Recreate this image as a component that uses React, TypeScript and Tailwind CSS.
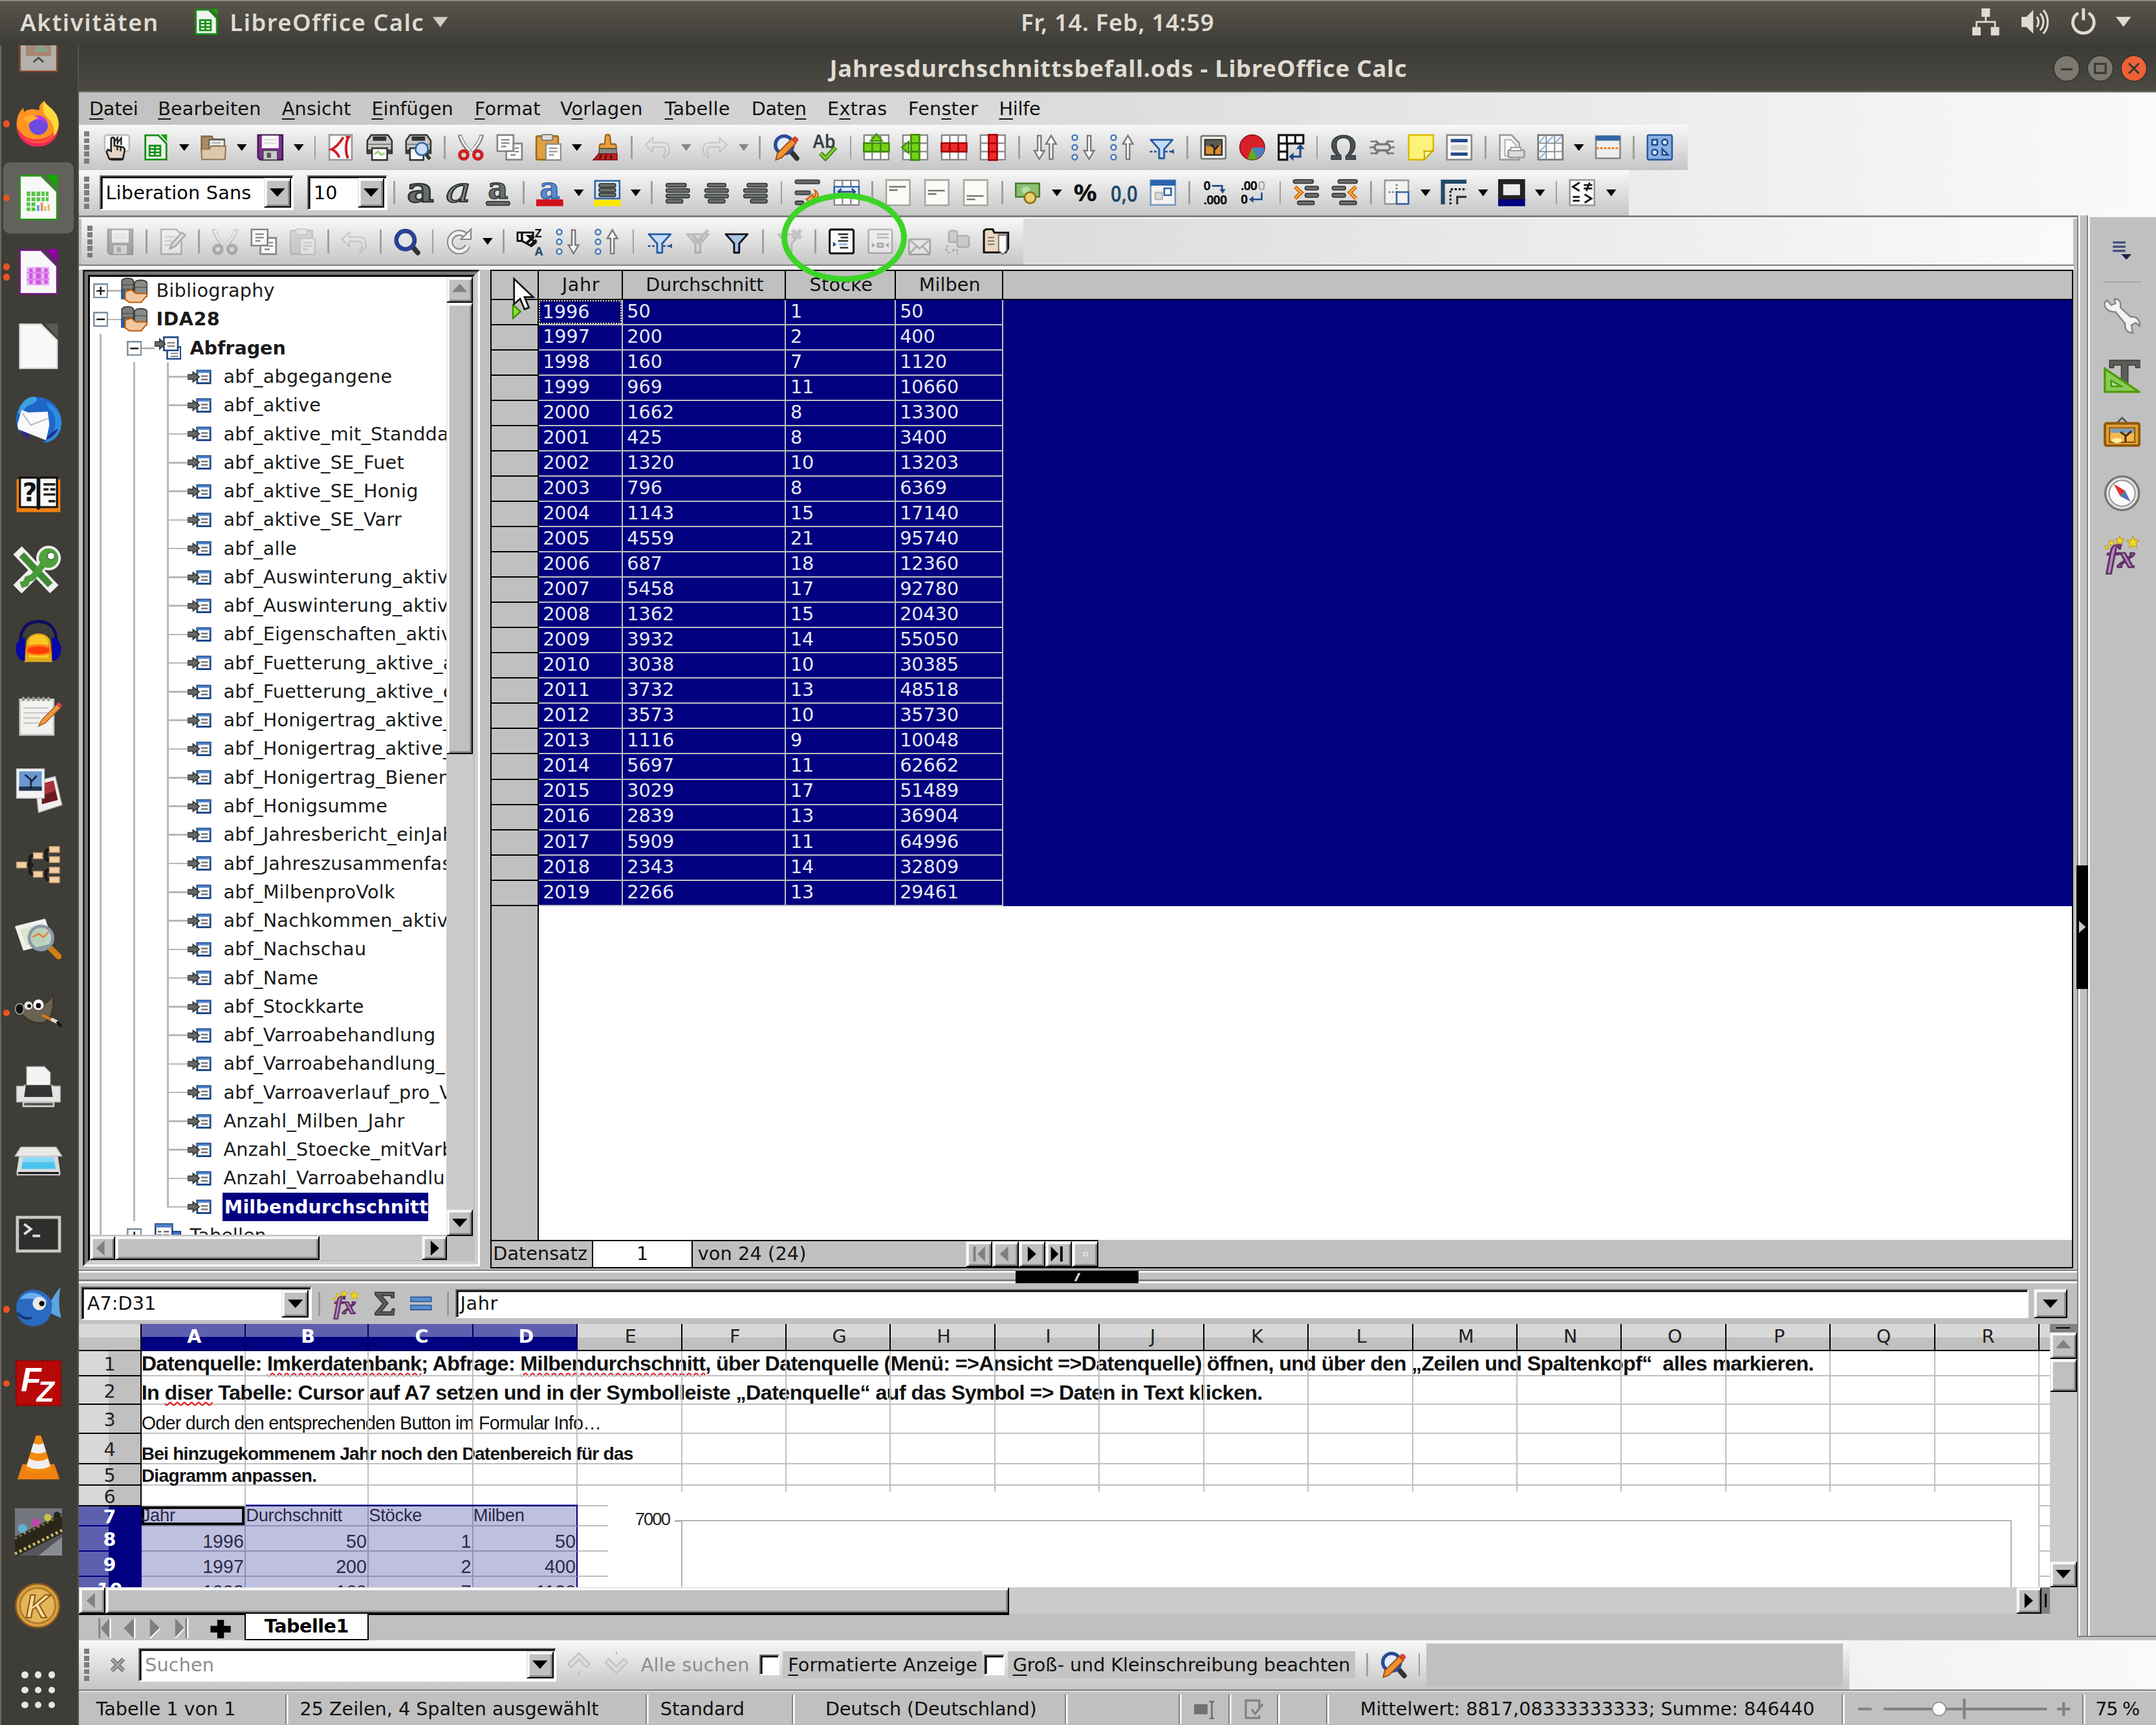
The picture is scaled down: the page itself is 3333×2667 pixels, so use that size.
import { useMemo, type ReactNode } from "react";
import clsx from "clsx";

const UI = '"DejaVu Sans"';
const SHELL = '"Noto Sans"';
const SHEET = '"Liberation Sans"';

const RECORDS = [
  [1996, 50, 1, 50],
  [1997, 200, 2, 400],
  [1998, 160, 7, 1120],
  [1999, 969, 11, 10660],
  [2000, 1662, 8, 13300],
  [2001, 425, 8, 3400],
  [2002, 1320, 10, 13203],
  [2003, 796, 8, 6369],
  [2004, 1143, 15, 17140],
  [2005, 4559, 21, 95740],
  [2006, 687, 18, 12360],
  [2007, 5458, 17, 92780],
  [2008, 1362, 15, 20430],
  [2009, 3932, 14, 55050],
  [2010, 3038, 10, 30385],
  [2011, 3732, 13, 48518],
  [2012, 3573, 10, 35730],
  [2013, 1116, 9, 10048],
  [2014, 5697, 11, 62662],
  [2015, 3029, 17, 51489],
  [2016, 2839, 13, 36904],
  [2017, 5909, 11, 64996],
  [2018, 2343, 14, 32809],
  [2019, 2266, 13, 29461],
];

const QUERIES = [
  "abf_abgegangene",
  "abf_aktive",
  "abf_aktive_mit_Standdaten",
  "abf_aktive_SE_Fuet",
  "abf_aktive_SE_Honig",
  "abf_aktive_SE_Varr",
  "abf_alle",
  "abf_Auswinterung_aktive",
  "abf_Auswinterung_aktive",
  "abf_Eigenschaften_aktive",
  "abf_Fuetterung_aktive_a",
  "abf_Fuetterung_aktive_e",
  "abf_Honigertrag_aktive_",
  "abf_Honigertrag_aktive_",
  "abf_Honigertrag_Bienen",
  "abf_Honigsumme",
  "abf_Jahresbericht_einJahr",
  "abf_Jahreszusammenfass",
  "abf_MilbenproVolk",
  "abf_Nachkommen_aktive",
  "abf_Nachschau",
  "abf_Name",
  "abf_Stockkarte",
  "abf_Varroabehandlung",
  "abf_Varroabehandlung_a",
  "abf_Varroaverlauf_pro_V",
  "Anzahl_Milben_Jahr",
  "Anzahl_Stoecke_mitVarb",
  "Anzahl_Varroabehandlun",
  "Milbendurchschnitt",
];

// "_" marks the mnemonic letter, second value is the width of the entry
const MENUS: [string, number, number][] = [
  ["_Datei", 29, 40.8],
  ["_Bearbeiten", 61.2, 73.6],
  ["_Ansicht", 41, 53.2],
  ["_Einfügen", 48.5, 61.2],
  ["_Format", 39.2, 50.8],
  ["V_orlagen", 49, 62],
  ["_Tabelle", 38.8, 51.6],
  ["Date_n", 32.5, 45],
  ["E_xtras", 35.5, 48],
  ["Fen_ster", 41.5, 54],
  ["_Hilfe", 24.5, 30],
];

let ctx: CanvasRenderingContext2D | null = null;
function textWidth(text: string, font: string) {
  if (!ctx) ctx = document.createElement("canvas").getContext("2d");
  if (!ctx) return 0;
  ctx.font = font;
  return ctx.measureText(text).width;
}

/** One line of text, tracked so that it fills `w` pixels. */
function Fit({ text, w, size = 11, family = UI, weight = 400, className, children }: {
  text: string; w: number; size?: number; family?: string; weight?: number; className?: string; children?: ReactNode;
}) {
  const spacing = useMemo(
    () => (w - textWidth(text, `${weight} ${size * 10}px ${family}`) / 10) / text.length,
    [text, w, size, family, weight]
  );
  return (
    <span
      className={clsx("whitespace-pre", className)}
      style={{ letterSpacing: `${spacing}px`, fontSize: size, fontFamily: `${family}, sans-serif`, fontWeight: weight }}
    >
      {children ?? text}
    </span>
  );
}

function Mnemonic({ label, w }: { label: string; w: number }) {
  const i = label.indexOf("_");
  return (
    <Fit text={label.replace("_", "")} w={w}>
      {label.slice(0, i)}
      <span className="underline underline-offset-2">{label[i + 1]}</span>
      {label.slice(i + 2)}
    </Fit>
  );
}

const floppy = (
  <>
    <path d="M.7.7h14.6v14.6H2L.7 14z" fill="#7d2f92" stroke="#431a52" />
    <rect x="3" y="1" width="10" height="7.5" fill="#fbfbfb" />
    <path d="M4.2 3.5h7.6M4.200 5.5h7.6" stroke="#ddd" />
    <rect x="3.7" y="9.8" width="8.6" height="5.7" fill="#c9c9c9" stroke="#444" strokeWidth=".7" />
    <rect x="6" y="11.2" width="2.4" height="3" fill="#555" />
  </>
);
const scissors = (
  <>
    <path d="M1.5.5c.4 3 3.400 7.6 5.8 10M14.5.5c-.4 3-3.4 7.6-5.8 10" stroke="#777" strokeWidth="2.4" fill="none" />
    <path d="M1.8 1c.6 3 3.2 6.8 5.6 9M14.2 1c-.6 3-3.2 6.8-5.6 9" stroke="#f4f4f4" strokeWidth="1.2" fill="none" />
    <circle cx="3.8" cy="12.5" r="2.4" fill="none" stroke="#d02020" strokeWidth="2" />
    <circle cx="12.2" cy="12.5" r="2.4" fill="none" stroke="#d02020" strokeWidth="2" />
  </>
);
const copy = (
  <>
    <path d="M.7.7h9.6v9.6H.7z" fill="#fbfbfb" stroke="#85857f" />
    <path d="M3 3.500h5M3 5.500h5M3 7.500h3" stroke="#888" strokeWidth=".9" />
    <path d="M10.300 5.700h5v9.600H6v-5h4.300z" fill="#fbfbfb" stroke="#85857f" />
    <path d="M11 8.500h2.500M11 10.500h2.500M8.500 12.500h3" stroke="#888" strokeWidth=".9" />
  </>
);
const paste = (
  <>
    <rect x=".8" y="1.3" width="13" height="14" rx="1" fill="#e0a040" stroke="#a06a18" />
    <rect x="4" y=".4" width="6.5" height="3.4" rx="1" fill="#ddd" stroke="#777" strokeWidth=".7" />
    <path d="M6.500 6h8.800v9.500H6.500z" fill="#fbfbfb" stroke="#8a8a85" strokeWidth=".8" />
    <path d="M8.300 8.500h5M8.300 10.500h5M8.300 12.500h3" stroke="#999" strokeWidth=".9" />
  </>
);
const undo = (
  <path d="M.8 6.500 5 2.300v2.900h6c2.800 0 3.800 2 3.800 4 0 2.500-1.300 4-3 5l-.6-1.200c1.800-1.500 2.200-5-.4-5.200H5v2.900z" fill="#e8e8e8" stroke="#8f8f8f" strokeWidth=".8" />
);
const funnel = (fill: string, stroke: string) => (
  <path d="M1.500 3.500h13L9.500 9v5.500h-3V9z" fill={fill} stroke={stroke} strokeWidth="1.1" strokeLinejoin="round" />
);
const dots = (
  <g fill="#fff" stroke="#4a7ab8">
    <circle cx="2.5" cy="2.2" r="1.5" />
    <circle cx="2.5" cy="8" r="1.5" />
    <circle cx="2.5" cy="13.8" r="1.5" />
  </g>
);
const arrowDown = (x: number) => <path d={`M${x - 1} 1h2v9h2l-3 5-3-5h2z`} fill="#fbfbfb" stroke="#777" strokeWidth=".9" />;
const arrowUp = (x: number) => <path d={`M${x - 1} 15h2V6h2l-3-5-3 5h2z`} fill="#fbfbfb" stroke="#777" strokeWidth=".9" />;
const tableBase = (
  <path d="M.7.7h14.6v14.6H.7zM.7 5.500h14.6M.7 10.500h14.6M5.500.7v14.6M10.500.7v14.6" fill="#fbfbfb" stroke="#888" strokeWidth=".9" />
);
const bars = (list: [number, number, number][]) => (
  <g fill="#6b6d69" stroke="#2e3436" strokeWidth=".6">
    {list.map(([x, y, w]) => (
      <rect key={`${x}-${y}`} x={x} y={y} width={w} height="2.2" rx="1" />
    ))}
  </g>
);
const pageAt = (y: number) => (
  <>
    <rect x=".8" y=".5" width="14" height="15" fill="#fcfcf6" stroke="#a8a8a0" />
    <path d={`M2.500 ${y}h10M2.500 ${y + 2}h5`} stroke="#777" />
  </>
);
const printerBody = (
  <>
    <path d="M3 .7h10l2.300 3.300v7.500H.7V4z" fill="#c8cac6" stroke="#333" />
    <rect x="4" y="1.5" width="8" height="2.6" fill="#333" />
    <path d="M1 6.200h14" stroke="#777" strokeWidth=".7" />
    <path d="M1 9.200h14v2.300H1z" fill="#444" />
  </>
);

const ICONS: Record<string, ReactNode> = {
  hand: (
    <>
      <rect x=".7" y=".7" width="14.6" height="9.6" rx="1.5" fill="#fbfbfb" stroke="#bbb" />
      <path d="M3.500 15 1.800 10.800l.9-1.500 1.800.9V3.300c0-1.500 2-1.500 2 0V7l4.500.8c1.500.3 1.600 1 1.500 2.500L11.500 15z" fill="#e6d5c3" stroke="#222" />
      <path d="M8.200 7.500v2.300M10.200 8v2.300M6.500 4.500l1.800-2.200v4M8.500 5l2-2.500v4" stroke="#222" strokeWidth=".9" fill="none" />
      <path d="M3.800 14.300h7.500v1.500H4.500z" fill="#222" />
    </>
  ),
  new: (
    <>
      <path d="M1.800.8h7.700l4.800 5v9.400H1.800z" fill="#f0f2ee" stroke="#189018" strokeWidth="1.100" />
      <path d="M10.800.3h3.900v4.200z" fill="#18a303" />
      <path d="M4.300 7h6.400v6H4.300zM4.300 9h6.400M4.300 11h6.400M7.500 7v6" stroke="#189018" fill="#fff" strokeWidth="1.100" />
    </>
  ),
  open: (
    <>
      <path d="M1 1.500h6l1 1.700h6.500V10H1z" fill="#a88a63" stroke="#8a6a40" />
      <path d="M5.500 3.500h9V9h-9z" fill="#f6f6f6" stroke="#666" strokeWidth=".8" />
      <path d="M7 5.300h5.500M7 7h5.500" stroke="#999" strokeWidth=".7" />
      <path d="M.8 9h4.700l1.500-1.800h8.300l-.3 8H1.200z" fill="#dcc8aa" stroke="#92764e" strokeWidth=".8" />
    </>
  ),
  save: floppy,
  pdf: (
    <>
      <rect x="1.2" y=".6" width="13.400" height="14.800" fill="#fafafa" stroke="#999" />
      <path d="M9.500 2C7 6 5 8 2.500 9.200 4.500 9.800 6.500 12 7 14M12.700 1.500c-2 4-2 9.500-.5 13" stroke="#d01c24" strokeWidth="1.500" fill="none" />
      <path d="M11 1.200h2.700v1.200H11z" fill="#d01c24" />
    </>
  ),
  print: (
    <>
      {printerBody}
      <rect x="3.5" y="8.5" width="9" height="7" fill="#fafafa" stroke="#333" />
      <path d="m5 12 2-1.500 2 2 2-1" stroke="#9c6" fill="none" />
    </>
  ),
  preview: (
    <>
      {printerBody}
      <rect x="3" y="8.5" width="8" height="7" fill="#fafafa" stroke="#333" />
      <circle cx="10" cy="9" r="3.7" fill="#c9ddf5" stroke="#3465a4" />
      <path d="m12.500 12 2.300 3" stroke="#333" strokeWidth="2" />
    </>
  ),
  cut: scissors,
  copy,
  paste,
  brush: (
    <>
      <path d="M8 1.700c0-1.700 2.800-1.700 2.800 0l.4 4.300h2.100c.9 0 1.200.6 1.200 1.600v1.200H4.500V7.600C4.500 6.600 4.800 6 5.700 6h1.900z" fill="#e8a040" stroke="#95601a" strokeWidth=".8" />
      <path d="M4.500 8.800h10l.3 3H4z" fill="#8a8c88" stroke="#444" strokeWidth=".5" />
      <path d="M4 11.800h11v3.700H.8z" fill="#c02020" stroke="#701010" strokeWidth=".5" />
      <path d="M5.500 12.500 4.500 15M8.500 12.500 8 15M11.500 12.500V15" stroke="#401010" />
    </>
  ),
  undo: <g opacity=".35">{undo}</g>,
  redo: <g opacity=".35" transform="matrix(-1 0 0 1 16 0)">{undo}</g>,
  find: (
    <>
      <path d="m11.500 11 3 3.500" stroke="#333" strokeWidth="3" strokeLinecap="round" />
      <circle cx="7" cy="6.5" r="5.200" fill="#e4ecfa" stroke="#2a4a9a" strokeWidth="2.100" />
      <path d="m2 15.500 1-4 8.500-8.500L14 5.500l-8.500 8.700z" fill="#f09030" stroke="#9a5010" strokeWidth=".7" />
      <path d="m11.700 2.800 1.300-1.300c1.300 0 2.500 1 2.500 2.300l-1.300 1.500z" fill="#e04040" />
    </>
  ),
  spell: (
    <>
      <text x="1" y="8.5" fontSize="11" fontWeight="600" fontFamily="Noto Sans" textLength="13.500" lengthAdjust="spacingAndGlyphs" fill="#3a4044">Ab</text>
      <path d="m5.500 11.500 3 3L14.500 8" stroke="#3a7a10" strokeWidth="2.600" fill="none" />
      <path d="m5.500 11.500 3 3L14.500 8" stroke="#7fd330" strokeWidth="1.300" fill="none" />
    </>
  ),
  rowInsert: (
    <>
      {tableBase}
      <path d="M.5 5.500h15v5H.5z" fill="#73d216" stroke="#3f8a05" />
      <path d="m8 0 3.500 4.200h-7z" fill="#73d216" stroke="#3f8a05" strokeWidth=".8" />
      <path d="M5.500 5.500v5M10.500 5.500v5" stroke="#3f8a05" />
    </>
  ),
  colInsert: (
    <>
      {tableBase}
      <path d="M5.500.5h5v15h-5z" fill="#73d216" stroke="#3f8a05" />
      <path d="m0 8 4.200-3.500v7z" fill="#73d216" stroke="#3f8a05" strokeWidth=".8" />
      <path d="M5.500 5.500h5M5.500 10.500h5" stroke="#3f8a05" />
    </>
  ),
  rowDelete: (
    <>
      {tableBase}
      <path d="M.5 5.500h15v5H.5zM5.500 5.500v5M10.500 5.500v5" fill="#ef2929" stroke="#a40000" />
    </>
  ),
  colDelete: (
    <>
      {tableBase}
      <path d="M5.500.5h5v15h-5zM5.500 5.500h5M5.500 10.500h5" fill="#ef2929" stroke="#a40000" />
    </>
  ),
  sort: (
    <>
      {arrowDown(4.5)}
      {arrowUp(11.5)}
    </>
  ),
  sortAsc: (
    <>
      {dots}
      {arrowDown(11)}
    </>
  ),
  sortDesc: (
    <>
      {dots}
      {arrowUp(11)}
    </>
  ),
  autoFilter: (
    <>
      {funnel("#c4dcf6", "#2a5aa0")}
      <path d="M1 10.500h5M10 10.500h4" stroke="#2a5aa0" strokeDasharray="1.500 1" />
      <path d="m15.300 9-2 1.500 2 1.500z" fill="#204a87" />
    </>
  ),
  image: (
    <>
      <rect x=".7" y="1.2" width="14.6" height="13.6" rx="1" fill="#f4f4f0" stroke="#777" />
      <rect x="3" y="3.5" width="10" height="9" fill="#d89030" stroke="#333" />
      <path d="M3.500 4h9v2.500l-5 1.500-4-1z" fill="#5a5a50" />
      <path d="M8.500 12V8l-2-2M8.500 9.500 11 7" stroke="#222" fill="none" />
    </>
  ),
  chart: (
    <>
      <circle cx="8" cy="8" r="7.4" fill="#d8202a" stroke="#8a1018" strokeWidth=".6" />
      <path d="m8 8 7.300.3A7.400 7.400 0 0 1 11 14.700z" fill="#4a80c0" />
      <path d="m8 8 3.200 6.600a7.400 7.400 0 0 1-6 .2z" fill="#60a820" />
    </>
  ),
  pivot: (
    <>
      <path d="M.7.7h14.600v5H.7zM.7 5.700v9.600h5V5.700M5.500.7v5M10.500.7v5M.7 10.500h5" fill="#fff" stroke="#111" strokeWidth="1.200" />
      <path d="M8 13.500h5.500V8" stroke="#204a87" strokeWidth="1.200" fill="none" />
      <path d="M9.500 11v5L6.700 13.500zM11 9h5l-2.500-3z" fill="#204a87" />
    </>
  ),
  omega: (
    <path d="M.8 15.200v-2.400h3.400C2 11 1 9 1 6.800 1 3 4 .8 8 .8s7 2.200 7 6c0 2.200-1 4.200-3.200 6h3.400v2.400H9.400v-2c2-1.500 2.800-3.700 2.800-6.200 0-2.800-1.500-4.700-4.200-4.700S3.800 3.800 3.800 6.600c0 2.500.8 4.700 2.800 6.200v2.400z" fill="#4a5054" stroke="#2e3436" strokeWidth=".5" />
  ),
  link: (
    <g stroke="#777" fill="none" strokeWidth="1.3">
      <path d="M1 4.500h3.500M11.500 4.500H15M.5 8H4M12 8h3.500M1 11.500h3.500M11.500 11.500H15" strokeWidth="1" />
      <path d="m4 4 8 8M12 4l-8 8" />
      <rect x="3.500" y="6.2" width="9" height="3.600" rx="1.500" fill="#ddd" />
    </g>
  ),
  note: (
    <>
      <path d="M.7.7h14.600V10L9.800 15.300H.7z" fill="#fdf27a" stroke="#d8bc00" />
      <path d="M15.300 9.700c-2 .8-4 .8-5.500.5.300 2 .3 3.500 0 5.100z" fill="#fff8b0" stroke="#c8ac00" strokeWidth=".8" />
    </>
  ),
  header: (
    <>
      <rect x=".7" y=".7" width="14.6" height="14.6" fill="#fafafa" stroke="#888" />
      <path d="M3 3h10v2H3zM3 11h10v2H3z" fill="#204a87" />
      <path d="M3 6.500h10v3.300H3z" fill="#d3d7cf" />
    </>
  ),
  printArea: (
    <>
      <path d="M1 .7h7l4.500 4.800v9.800H1z" fill="#f2f2f0" stroke="#999" />
      <path d="M4 3.500h3.500l3 3V13H4z" fill="#fafafa" stroke="#aaa" strokeWidth=".7" />
      <rect x="6" y="9.500" width="9.500" height="4.5" rx="1" fill="#ddd" stroke="#999" />
      <path d="M7.500 8h6v2h-6z" fill="#fafafa" stroke="#999" strokeWidth=".7" />
    </>
  ),
  freeze: (
    <>
      <rect x=".7" y=".7" width="14.6" height="14.6" fill="#fafafa" stroke="#777" />
      <path d="m1.500 5 3-3.500M6 5l3.500-3.500M11 5l3.500-3.500M1.500 10.500 5 7M1.500 14.500 5 11" stroke="#8ab4e8" strokeWidth=".8" />
      <path d="M5.500.7v14.600M.7 5.500h14.600M10.500.7v14.600M.7 10.500h14.600" stroke="#888" strokeWidth=".7" />
    </>
  ),
  split: (
    <>
      <rect x=".8" y="1.5" width="14.4" height="13" fill="#eee" stroke="#888" />
      <path d="M.8 1h14.400v3H.8z" fill="#3465a4" />
      <path d="M1 8.500h14" stroke="#f57900" strokeDasharray="1.500 .8" />
    </>
  ),
  draw: (
    <>
      <rect x=".7" y=".7" width="14.6" height="14.6" rx="1" fill="#8ab0e4" stroke="#2a5aa0" />
      <g fill="#d6e6fa" stroke="#204a87">
        <rect x="3.5" y="3.5" width="3" height="3" />
        <circle cx="11" cy="5" r="1.7" />
        <circle cx="5" cy="11" r="1.7" />
        <path d="M9.500 9v3.500H13z" />
      </g>
    </>
  ),
  bold: <text x="0" y="13.500" fontSize="20" fontWeight="700" fontFamily="DejaVu Serif" textLength="16" lengthAdjust="spacingAndGlyphs" fill="#6a6c68" stroke="#2e3436" strokeWidth=".9">a</text>,
  italic: <text x="0" y="13.500" fontSize="20" fontStyle="italic" fontFamily="DejaVu Serif" textLength="15" lengthAdjust="spacingAndGlyphs" fill="#8a8c88" stroke="#2e3436" strokeWidth=".8">a</text>,
  underline: (
    <>
      <text x="2" y="11.500" fontSize="18" fontWeight="700" fontFamily="DejaVu Serif" textLength="12" lengthAdjust="spacingAndGlyphs" fill="#6a6c68" stroke="#2e3436" strokeWidth=".6">a</text>
      <rect x="1" y="13.3" width="14" height="2.2" rx="1" fill="#6b6d69" stroke="#2e3436" strokeWidth=".6" />
    </>
  ),
  fontColor: (
    <>
      <text x="2" y="11.500" fontSize="18" fontWeight="700" fontFamily="DejaVu Serif" textLength="12" lengthAdjust="spacingAndGlyphs" fill="#5a8aca" stroke="#2a5aa0" strokeWidth=".5">a</text>
      <path d="M0 12h16v4H0z" fill="#d01018" />
    </>
  ),
  highlight: (
    <>
      <rect x=".7" y="1" width="14.6" height="10.5" fill="#dce8f6" stroke="#3465a4" />
      {bars([[3, 2.6, 10], [3, 5.4, 10], [3, 8.2, 10]])}
      <path d="M0 12.300h16V16H0z" fill="#fce800" />
    </>
  ),
  left: bars([[1, 2.5, 12], [1, 5.7, 14], [1, 8.9, 14], [1, 12, 10]]),
  center: bars([[2.5, 2.5, 11], [1, 5.7, 14], [1, 8.9, 14], [3, 12, 10]]),
  right: bars([[3, 2.5, 12], [1, 5.7, 14], [1, 8.9, 14], [5, 12, 10]]),
  wrap: (
    <>
      {bars([[0.5, 0.5, 14.5], [0.5, 7, 9], [0.5, 13, 5]])}
      <path d="M12 6.500c3 1 3 6-1 6.500v2L7 12l4-3v2c1.500-.5 2-2.500 1-4.500z" fill="#f5a050" stroke="#ce5c00" strokeWidth=".7" />
    </>
  ),
  merge: (
    <>
      {tableBase}
      <path d="M.7 4.500h14.600v6H.7z" fill="#dce8f6" stroke="#3465a4" />
      <path d="M3 7.500h10M5 5.700 3 7.500l2 1.800M11 5.700l2 1.800-2 1.800" stroke="#204a87" fill="none" />
    </>
  ),
  top: pageAt(4.5),
  middle: pageAt(6.8),
  bottom: pageAt(10),
  currency: (
    <>
      <rect x=".5" y="2.5" width="14" height="8" fill="#8ac070" stroke="#4e7a30" />
      <ellipse cx="6.5" cy="6.5" rx="2.5" ry="2.3" fill="#b6dca0" />
      <circle cx="9" cy="11" r="3.3" fill="#e8d070" stroke="#8a7010" />
    </>
  ),
  percent: <text x="8" y="13" fontSize="14" fontWeight="700" fontFamily="Noto Sans" textAnchor="middle" textLength="14" lengthAdjust="spacingAndGlyphs" fill="#111">%</text>,
  number: <text x="8" y="13.5" fontSize="13" fontWeight="600" fontFamily="Noto Sans" textAnchor="middle" textLength="16" lengthAdjust="spacingAndGlyphs" fill="#204a6a">0,0</text>,
  date: (
    <>
      <rect x=".7" y=".7" width="14.6" height="14.6" fill="#f4f4f0" stroke="#7a9ac0" />
      <path d="M.5.5h15v3.300H.5z" fill="#2a66b0" />
      <path d="M3.500 8h4v4h-4z" fill="#ddd" stroke="#bbb" />
      <path d="M8.800 5.500h4v4h-4z" fill="#fff" stroke="#2a66b0" />
    </>
  ),
  decAdd: (
    <g fill="#111">
      <text x="1" y="6.5" fontSize="7.5" fontFamily="Noto Sans" fontWeight="700">0</text>
      <text x="1" y="15" fontSize="7.5" fontFamily="Noto Sans" fontWeight="700" textLength="14">.000</text>
      <path d="M6 4h6v3" stroke="#204a87" fill="none" />
      <path d="M10.500 6h3.600l-1.800 2.500z" fill="#204a87" />
    </g>
  ),
  decDel: (
    <g fill="#111">
      <text x="0" y="6.5" fontSize="7.5" fontFamily="Noto Sans" fontWeight="700" textLength="10">.00</text>
      <text x="10.3" y="6.5" fontSize="7.5" fontFamily="Noto Sans" fill="#999">0</text>
      <text x="0" y="14.5" fontSize="7.5" fontFamily="Noto Sans" fontWeight="700">0</text>
      <path d="M12.500 8v4H7" stroke="#204a87" fill="none" />
      <path d="M7.500 10v4L5 12z" fill="#204a87" />
    </g>
  ),
  indent: (
    <>
      {bars([[0.5, 0.3, 12], [7.5, 4.2, 8], [7.5, 8.5, 8], [3, 13, 10]])}
      <path d="m1.500 4.500 3.700 3.400-3.700 3.600" stroke="#ce5c00" strokeWidth="2.2" fill="none" />
      <path d="m1.500 4.500 3.700 3.400-3.700 3.600" stroke="#fcaf3e" strokeWidth="1" fill="none" />
    </>
  ),
  outdent: (
    <>
      {bars([[4, 0.3, 11.5], [0.5, 4.2, 8], [0.5, 8.5, 8], [5, 13, 10]])}
      <path d="M14.700 4.500 11 7.900l3.700 3.600" stroke="#ce5c00" strokeWidth="2.2" fill="none" />
      <path d="M14.700 4.500 11 7.900l3.700 3.600" stroke="#fcaf3e" strokeWidth="1" fill="none" />
    </>
  ),
  border: (
    <>
      <rect x=".7" y=".7" width="14" height="14" fill="#f2f2ee" stroke="#999" />
      <path d="M7.700 3v4.700M3 7.700h4.700" stroke="#777" strokeDasharray="1 1" />
      <path d="M7.700 7.700h7v7h-7z" fill="none" stroke="#3465a4" />
    </>
  ),
  lineStyle: (
    <g fill="none">
      <path d="M1 15V1.500h14" stroke="#204a6a" strokeWidth="2.400" />
      <path d="M5.500 15V6H15" stroke="#111" strokeWidth="1.200" strokeDasharray="1.300 1" />
      <path d="M9.500 15v-4.500H15" stroke="#333" strokeWidth="1.2" />
    </g>
  ),
  borderColor: (
    <>
      <rect x="1.5" y="1.5" width="13" height="9.5" fill="#ececec" stroke="#222" strokeWidth="3" />
      <path d="M0 12h16v4H0z" fill="#000080" />
    </>
  ),
  condition: (
    <>
      <rect x=".7" y=".5" width="14.6" height="15" fill="#fcfcfc" stroke="#999" />
      <path d="M6.500 2 2.500 4.500l4 2.500M9 3.500h5M9 5.500h5M12.500 2l-2 5M2.500 10.500h4M2.500 12.800h4M9.500 9l4 2.500-4 2.500" stroke="#111" strokeWidth="1.1" fill="none" />
    </>
  ),
  saveOff: <g opacity=".35" className="grayscale">{floppy}</g>,
  editOff: (
    <g opacity=".5">
      <path d="M1.200.7h9l3 3v11.600h-12z" fill="#f4f4f4" stroke="#888" />
      <path d="M3.500 5h6M3.500 7.500h4M3.500 10h3" stroke="#bbb" />
      <path d="m6.500 12 1-3 6-6.500 2 1.500-6 6.700z" fill="#ddd" stroke="#777" />
    </g>
  ),
  cutOff: <g opacity=".3" className="grayscale">{scissors}</g>,
  pasteOff: <g opacity=".3" className="grayscale">{paste}</g>,
  search: (
    <>
      <path d="m11.500 11 3 3.500" stroke="#333" strokeWidth="3" strokeLinecap="round" />
      <circle cx="7.2" cy="7" r="5.400" fill="#e4e4e6" stroke="#2c3f92" strokeWidth="2.600" />
    </>
  ),
  refresh: (
    <>
      <path d="M13 10.500A5.500 5.500 0 1 1 12.500 5" stroke="#888" strokeWidth="3.6" fill="none" />
      <path d="M13 10.500A5.500 5.500 0 1 1 12.500 5" stroke="#f0f0f0" strokeWidth="2" fill="none" />
      <path d="M15 .5v6H9z" fill="#f0f0f0" stroke="#888" strokeWidth=".8" />
    </>
  ),
  sortBy: (
    <>
      <path d="M.8 2.500h2.500v5H.8z" fill="#fff" stroke="#111" strokeWidth="1.100" />
      <path d="M3.500 2.500h6.500v2H7l4.500 4-2.500 2-5.500-3z" fill="#fff" stroke="#111" strokeWidth="1.200" />
      <path d="m6 9 4.500-4M8 10.500 12 7" stroke="#111" strokeWidth="1.600" />
      <text x="11" y="5.500" fontSize="7" fontWeight="700" fontFamily="Noto Sans" fill="#111">Z</text>
      <text x="11" y="16" fontSize="7" fontWeight="700" fontFamily="Noto Sans" fill="#204a6a">A</text>
    </>
  ),
  funnelOff: (
    <g opacity=".35">
      {funnel("#ccc", "#666")}
      <path d="m5 4 3 4 6-7" stroke="#777" strokeWidth="2" fill="none" />
    </g>
  ),
  funnel: funnel("#a8c4e8", "#111"),
  funnelDel: (
    <g opacity=".3">
      {funnel("#ccc", "#666")}
      <path d="m10 1 5 5M15 1l-5 5" stroke="#777" strokeWidth="2.400" />
    </g>
  ),
  dataText: (
    <>
      <rect x="1" y=".7" width="14.200" height="14.200" rx="1" fill="#fbfbfb" stroke="#111" strokeWidth="1.2" />
      <path d="M6 3.500h6M7.500 5.500h4.500M6 7.500h6M7 11.500h5" stroke="#333" />
      <path d="M6.500 9.500h5" stroke="#8ab4e8" />
      <path d="m3 8 2 1.500L3 11z" fill="#204a87" />
    </>
  ),
  dataFields: (
    <g opacity=".4">
      <rect x="1" y=".7" width="14" height="14" rx="1" fill="#fbfbfb" stroke="#666" />
      <path d="M6 3.500h7M6 5.500h7" stroke="#777" />
      <path d="m3 8.500 2 1.500-2 1.500zM13 8.500 11 10l2 1.500z" fill="#555" />
      <rect x="6.5" y="9" width="3" height="2" fill="none" stroke="#555" />
    </g>
  ),
  mail: (
    <g opacity=".45">
      <rect x="2" y="6.500" width="12.500" height="9" rx="1" fill="#f0f0f0" stroke="#666" />
      <path d="m2.500 7 5.700 5 5.800-5M2.500 15l4-4.500M14 15l-4-4.500" stroke="#777" fill="none" />
    </g>
  ),
  docSource: (
    <g opacity=".4" stroke="#666">
      <path d="M3 2.500v5c0 1 5 1 5 0v-5c0-1.500-5-1.500-5 0M8 5.500v5c0 1 7 1 7 0v-5c0-1.500-7-1.500-7 0" fill="#aaa" />
      <path d="M2.500 10c-2 2-1 4 1 4.500M5 13h3v2.500" fill="none" strokeDasharray="1.500 .8" />
    </g>
  ),
  explorer: (
    <>
      <path d="M.8 1.500 2 .6h4l1 2h8.200v9.200l-1.500 2.500H.8z" fill="#ecd9c0" stroke="#111" strokeWidth="1.200" />
      <path d="M9.500 4h4.800v9L12 15.500l-2.500-2.300z" fill="#fcfcfc" stroke="#777" strokeWidth=".8" />
      <path d="M3 5.500h4M3 7.500h4M3 9.500h4" stroke="#777" strokeWidth=".8" />
    </>
  ),
  wizard: (
    <>
      <text x="1" y="14" fontSize="14.500" fontStyle="italic" fontWeight="700" fontFamily="Liberation Serif" textLength="13" lengthAdjust="spacingAndGlyphs" fill="#b888c0" stroke="#63306a" strokeWidth=".8">fx</text>
      <g fill="#f0d820" stroke="#b09a10" strokeWidth=".3">
        <path d="m13 0 .8 1.800 2 .2-1.500 1.300.5 2-1.800-1-1.800 1 .5-2L10.200 2l2-.2z" />
        <path d="m7 0 .6 1.200 1.400.1-1 1 .3 1.400L7 3l-1.300.7.300-1.400-1-1 1.400-.1z" />
        <circle cx="3.3" cy="3" r="1" />
        <circle cx="1.2" cy="5" r=".8" />
      </g>
    </>
  ),
  sum: <path d="M2 .8h12v3.500h-1.700L12 3H6.200l4 4.800-4.400 5.400h6.400l.7-1.900h1.400l-.5 4H2v-1.500L7 8 2 2.300z" fill="#5b5d59" stroke="#2e3436" strokeWidth=".6" />,
  equals: <path d="M.5 3.500h15v3.300H.5zM.5 9.500h15v3.300H.5z" fill="#5a8fd0" stroke="#2a5aa0" strokeWidth=".8" />,
};

function Icon({ name, className = "size-4" }: { name: string; className?: string }) {
  return (
    <svg viewBox="0 0 16 16" className={clsx("shrink-0 overflow-visible", className)}>
      {ICONS[name]}
    </svg>
  );
}

function Caret({ className = "fill-black" }: { className?: string }) {
  return (
    <svg viewBox="0 0 6 4" className={clsx("h-[4px] w-[6px] shrink-0", className)}>
      <path d="M0 0h6L3 4z" />
    </svg>
  );
}

function Separator() {
  return (
    <div className="flex w-2 shrink-0 justify-center">
      <div className="h-[14px] w-px bg-[#a0a0a0]" />
    </div>
  );
}

/** Space separated button names: "v" is a drop-down arrow, "V" a disabled one, "|" a separator. */
function Tools({ items }: { items: string }) {
  return (
    <>
      {items.split(" ").map((name, i) =>
        name === "|" ? (
          <Separator key={i} />
        ) : name === "v" || name === "V" ? (
          <div key={i} className="flex w-[11px] shrink-0 justify-center">
            <Caret className={name === "V" ? "fill-[#888]" : "fill-black"} />
          </div>
        ) : (
          <button key={i} className="flex w-[23px] shrink-0 justify-center">
            <Icon name={name} />
          </button>
        )
      )}
    </>
  );
}

function Grip({ className }: { className?: string }) {
  return (
    <div className={clsx("flex w-[3px] shrink-0 flex-col gap-px", className)}>
      {[0, 1, 2, 3, 4].map((i) => (
        <div key={i} className="h-[3px] bg-[#7c7c7c]" />
      ))}
    </div>
  );
}

const raised =
  "flex items-center justify-center bg-[#c0c0c0] border border-t-[#e8e8e8] border-l-[#e8e8e8] border-r-black border-b-black shadow-[inset_1px_1px_0_#fff,inset_-1px_-1px_0_#808080]";
const sunken =
  "flex bg-white border border-t-[#707070] border-l-[#707070] border-r-white border-b-white shadow-[inset_1px_1px_0_#000]";

function Arrow({ dir, off, className = "size-[9px]" }: { dir: "up" | "down" | "left" | "right"; off?: boolean; className?: string }) {
  const d = { up: "M0 6 4.500 1 9 6z", down: "M0 2h9L4.500 7z", left: "M6 0 1 4.500 6 9z", right: "M3 0l5 4.500L3 9z" }[dir];
  return (
    <svg viewBox="0 0 9 9" className={clsx("shrink-0", className, off ? "fill-[#808080]" : "fill-black")}>
      <path d={d} />
    </svg>
  );
}

function Combo({ value, w, className, textClass }: { value: string; w: number; className: string; textClass?: string }) {
  return (
    <div className={clsx(sunken, "shrink-0 items-stretch pt-px pr-px pb-px pl-px", className)}>
      <div className="flex flex-1 items-center pl-[2px]">
        <Fit text={value} w={w} className={textClass} />
      </div>
      <div className={clsx(raised, "w-4")}>
        <Arrow dir="down" />
      </div>
    </div>
  );
}

function TopBar() {
  return (
    <div className="flex h-[27px] items-center border-t border-[#8a8880] bg-linear-to-b from-[#58554b] to-[#3d3c37] pb-[1.5px] text-[#dfdbd2]">
      <div className="flex w-[606px] shrink-0 items-center pl-3">
        <Fit text="Aktivitäten" w={82.5} size={14} family={SHELL} weight={600} />
        <svg viewBox="0 0 16 16" className="ml-[20px] size-4">
          {ICONS.new}
        </svg>
        <Fit text="LibreOffice Calc" w={115.5} size={14} family={SHELL} weight={600} className="ml-[6px]" />
        <Caret className="ml-[5px] !h-[7px] !w-[9px] fill-[#cfccc4]" />
      </div>
      <Fit text="Fr, 14. Feb, 14:59" w={115} size={14} family={SHELL} weight={600} />
      <div className="flex flex-1 items-center justify-end gap-[13px] pr-[16px]">
        <svg viewBox="0 0 16 16" className="size-4" fill="#dfdbd2">
          <path d="M5.500 0h5v5h-5zM0 11h5v5H0zM11 11h5v5h-5z" />
          <path d="M8 5v3M2.500 11V8h11v3" fill="none" stroke="#dfdbd2" />
        </svg>
        <svg viewBox="0 0 16 16" className="size-4">
          <path d="M0 5h3l4-4v14l-4-4H0z" fill="#dfdbd2" />
          <path d="M9 5c1.500 1.500 1.500 4.500 0 6M11 3c2.700 2.500 2.700 7.500 0 10M13 1c3.500 4 3.500 10 0 14" fill="none" stroke="#dfdbd2" strokeWidth="1.2" />
        </svg>
        <svg viewBox="0 0 16 16" className="size-4" fill="none" stroke="#dfdbd2" strokeWidth="1.8">
          <path d="M5 2.800a6.300 6.300 0 1 0 6 0M8 0v7" />
        </svg>
        <Caret className="-ml-[2px] !h-[6px] !w-[9px] fill-[#dfdbd2]" />
      </div>
    </div>
  );
}

const officeDoc = (stroke: string, fill: string) => (
  <>
    <path d="M3 1h12.500L25 10.500V27H3z" fill="#f8f8f8" stroke={stroke} />
    <path d="M18 .5h7.500V9z" fill={fill} />
  </>
);

// dock launchers, drawn on a 28 × 28 grid
const LAUNCHERS: { name: string; dots?: number; active?: boolean; art: ReactNode }[] = [
  {
    name: "Impress",
    art: (
      <>
        <path d="M3 1h22v26H3z" fill="#b4b2ae" stroke="#8a4a30" />
        <path d="M6.500 5h15v13h-15z" fill="#a88672" />
        <path d="M11 15.500c1-5 8-5 9 0z" fill="#8aa08a" />
        <path d="m11 21.500 3-2.500 3 2.500" stroke="#444" fill="none" />
      </>
    ),
  },
  {
    name: "Firefox",
    dots: 1,
    art: (
      <>
        <path d="M1 15C1 9 3 6.500 5 4.500l.5 2.500c3-3 9-1 9-1C14 3.500 15.500 1.500 17.500.5c1 3 4.500 3.500 7 8 3.500 8.500-2 18.500-11 18.500C6 27 1 21.500 1 15z" fill="#ff9420" />
        <path d="M1 14c.5 4 4 8 9 9 8 1.300 14-3 16-9 .5 8-5 13.500-12.500 13.500C6 27.500 1 21.500 1 14z" fill="#f8285a" />
        <path d="M3 19c3 5 9 6 14 4.500S25 17 26 13c0 5-2 8-5 10.500-6 4-15 2-18-4.500z" fill="#ff5a36" />
        <path d="M17.500.3c1 3 5 4 7.500 9 2 5 1 9-2 12 1-6-1-8-4-11.500-2.500-2.500-3-6-1.500-9.500z" fill="#ffd93a" />
        <circle cx="14" cy="15" r="5.6" fill="#6b4be0" />
        <path d="M11 9.500c4-1.500 8.500 1 8.500 5.500-2-3.500-4-3.500-8-3z" fill="#b63be8" />
        <path d="M5 11c2-2.500 6-2.500 9-.500-2 .500-3.500 2-5.500 3C7 13 6 12 5 11z" fill="#ffae30" />
      </>
    ),
  },
  {
    name: "Calc",
    dots: 1,
    active: true,
    art: (
      <>
        {officeDoc("#2a9a1a", "#18a303")}
        <path d="M7 10.500h13v11.500H7z" fill="#58c048" />
        <path d="M7 13.500h13M7 16.500h13M7 19.500h13M9.500 10.500V22M12.500 10.500V22M15.500 10.500V22M18 10.500V22" stroke="#e8f8e8" strokeWidth=".8" />
        <path d="M12.500 17h8v5.500h-8z" fill="#fff" />
        <path d="M13.800 22v-3.500" stroke="#5aa8d8" strokeWidth="1.600" />
        <path d="M16 22v-5" stroke="#f09070" strokeWidth="1.600" />
        <path d="M18 22v-3M20 22v-4" stroke="#d8c070" strokeWidth="1.300" />
      </>
    ),
  },
  {
    name: "Base",
    dots: 2,
    art: (
      <>
        {officeDoc("#7a1a90", "#8e03a3")}
        <path d="M7 11h13.500v11H7z" fill="#eab4f4" />
        <path d="M8.500 12h2v9h-2zM12.500 11.500h3v10h-3zM17.500 12h2v9h-2z" fill="#cf58e0" />
        <path d="M7 14.500h13.500M7 18.500h13.500" stroke="#dc88ea" />
      </>
    ),
  },
  { name: "LibreOffice", art: <>{officeDoc("#e0e0e0", "#5a5a5a")}</> },
  {
    name: "Thunderbird",
    art: (
      <>
        <path d="M.8 15C0 7 6 .5 11 .3 19-.5 27 5 27.500 14c.3 7-5 13-12 13.500 3-1 4-2 4-3L3 21C1.500 19.500 1 17 .8 15z" fill="#1f66c8" />
        <path d="M2 10C3 4 7 0 11.500.2 15 1.500 12 4 9 5 6 6 5 8.500 3.500 11z" fill="#3aa0e0" />
        <path d="M20 7c3 2 5 6 3.500 12-1 3-3.500 5.500-6 8.500 8-1 11-8 10-14-.5-4-4-8-9-10z" fill="#2a8ce0" />
        <path d="M2 18c1 3 3.500 6 7 7.500L8 22zM17 26c4-.5 8-4 8.500-7l-3 2z" fill="#2b2a90" />
        <path d="m4 8 4 1.500 11.500-.5 1 8-2 9L2 19.500l-.5-3z" fill="#fafafa" />
        <path d="m4.500 10 5 7 10-4" stroke="#bbb" strokeWidth=".8" fill="none" />
      </>
    ),
  },
  {
    name: "Help",
    art: (
      <>
        <path d="M1 5h26v19.500H1z" fill="#f08010" />
        <path d="M3 4h10l1 1 1-1h10v17.500H15l-1 1-1-1H3z" fill="#fafafa" stroke="#111" strokeWidth="1.2" />
        <path d="M14 4v18.500" stroke="#111" strokeWidth="2.200" />
        <text x="4.500" y="18" fontSize="15" fontWeight="700" fontFamily="DejaVu Sans" fill="#111">?</text>
        <path d="M17 8h7M17 11h3M21 11h3M17 14h7M20 18h4" stroke="#222" strokeWidth="1.4" />
      </>
    ),
  },
  {
    name: "KeePassX",
    art: (
      <>
        <path d="m4 6 17 18M4 24 19 9" stroke="#f0f0ee" strokeWidth="7" strokeLinecap="square" />
        <circle cx="20" cy="8" r="7.3" fill="#f0f0ee" />
        <path d="m4 6 17 18" stroke="#3f8a32" strokeWidth="4" />
        <path d="m3.500 24 3-1 1-2.500 3-1L19 9" stroke="#4a9a3a" strokeWidth="3.800" fill="none" />
        <circle cx="20" cy="8" r="5.800" fill="#4fa03e" />
        <circle cx="21.500" cy="6.800" r="2.200" fill="#fff" stroke="#3a6a30" strokeWidth=".5" />
      </>
    ),
  },
  {
    name: "Audacity",
    art: (
      <>
        <path d="M7 13c2-6 12-6 14 0l1.500 12.500h-17z" fill="#e0a818" />
        <path d="M8.500 12.500c2-4 9-4 11 0L20 23H8z" fill="#f8c820" />
        <path d="M6.500 16.500c4-2 11-2 15 0v4c-4 1.500-11 1.500-15 0z" fill="#ff7a10" />
        <ellipse cx="14" cy="18.500" rx="6.500" ry="2.200" fill="#ff3a08" />
        <path d="M4 16C2 8 6 1.500 14 1.500S26 8 24 16" stroke="#0c0c60" strokeWidth="1.800" fill="none" />
        <path d="M6 11v14c-3 0-5.500-3-5.500-7S3 11 6 11zM22 11v14c3 0 5.500-3 5.500-7S25 11 22 11z" fill="#0808a8" />
      </>
    ),
  },
  {
    name: "Notes",
    art: (
      <>
        <path d="M3 4h20v21H3z" fill="#f2f2f0" stroke="#c8c8c4" />
        <path d="M5 5V2.500M8 5V2.500M11 5V2.500M14 5V2.500M17 5V2.500M20 5V2.500" stroke="#999" strokeWidth="1.5" />
        <path d="M5 9h15M5 12h15M5 15h10M5 18h10" stroke="#ccc" />
        <path d="m14 20 2-4 9-9 2 2-9 9z" fill="#f09840" stroke="#a06020" strokeWidth=".5" />
        <path d="m24.500 7 1.500-1.500 2 2L27 9z" fill="#e04050" />
      </>
    ),
  },
  {
    name: "Photos",
    art: (
      <>
        <path d="m12 8.500 12-3 4 17-14 4.500z" fill="#eee" stroke="#aaa" strokeWidth=".5" />
        <path d="m17 9.500 6-1.500 2.500 11.500L16 22z" fill="#a83038" />
        <path d="m16 17 8-3 1.500 5.500L16 22z" fill="#6a1820" />
        <path d="M1 1h16.500v17.500H1z" fill="#f4f4f4" stroke="#bbb" strokeWidth=".5" />
        <path d="M2.500 2.500h13.500V14H2.500z" fill="#6a98d0" />
        <path d="M2.500 11.500H16V14H2.500z" fill="#23364e" />
        <path d="M9.500 13V7.500l-3.500-3M9.500 9l3.500-4" stroke="#1a2430" fill="none" />
      </>
    ),
  },
  {
    name: "Outline",
    art: (
      <>
        <path d="M6 14h5M9 8.500v11M9 8.500h8M9 19.500h8M18.500 5v6M18.500 17v5.500M18.500 5H21M18.500 11H21M18.500 17H21M18.500 22.500H21" stroke="#1a1a18" strokeWidth="1.8" fill="none" />
        <g fill="#f0cfa0" stroke="#c09a70" strokeWidth=".5">
          <rect x="1" y="12.2" width="6" height="3.5" />
          <rect x="11" y="6.7" width="5.5" height="3.5" />
          <rect x="11" y="17.7" width="5.5" height="3.5" />
          <rect x="20.500" y="3" width="6" height="3.5" />
          <rect x="20.500" y="9" width="6" height="3.5" />
          <rect x="20.500" y="15.300" width="6" height="3.5" />
          <rect x="20.500" y="21" width="6" height="3.5" />
        </g>
      </>
    ),
  },
  {
    name: "Viewer",
    art: (
      <>
        <path d="m0 6.500 18-4.500 5 14.500L5 21z" fill="#f0f0ee" />
        <path d="m3 8.500 13-3.500 3 10-12 3z" fill="#dce4cc" />
        <path d="m21.500 20 4.500 4.500" stroke="#d08010" strokeWidth="3.5" strokeLinecap="round" />
        <circle cx="15.500" cy="13.5" r="7" fill="#a8c8b0" fillOpacity=".7" stroke="#8a98a8" strokeWidth="1.8" />
        <path d="m10.500 13 3.500-2 3 2 3-3" stroke="#e08040" fill="none" />
      </>
    ),
  },
  {
    name: "GIMP",
    dots: 1,
    art: (
      <>
        <path d="M2 11c2-4 8-3 12-2 4 0 6-2 8.500-6 1 7 0 14-5 16.500C12 21 5 18 2 11z" fill="#6a6252" stroke="#3a362c" />
        <circle cx="8" cy="9.5" r="2.5" fill="#e8e8e8" />
        <circle cx="14" cy="9" r="3.1" fill="#fff" />
        <circle cx="8.5" cy="9.7" r="1.1" />
        <circle cx="14" cy="9.5" r="1.500" />
        <ellipse cx="2.8" cy="11.5" rx="2.5" ry="3.2" fill="#111" stroke="#aaa" strokeWidth=".6" />
        <path d="m16 15 6 3" stroke="#d07818" strokeWidth="1.6" />
        <path d="m21.500 17.500 4 2" stroke="#ddd" strokeWidth="2" />
        <path d="m25 19 2.500 3" stroke="#111" strokeWidth="1.600" />
      </>
    ),
  },
  {
    name: "Printer",
    art: (
      <>
        <path d="M7 2h10.500L21 5.500V15H7z" fill="#f4f4f4" stroke="#bbb" strokeWidth=".5" />
        <path d="M1 13.500h4.500V13h17v.500H27V23H1z" fill="#e4e4e2" stroke="#aaa" strokeWidth=".5" />
        <path d="M6.500 13h15l1 7h-17z" fill="#333" />
        <path d="M5 23h18v2.500H5z" fill="#555" stroke="#ccc" />
      </>
    ),
  },
  {
    name: "Scanner",
    art: (
      <>
        <path d="M3.500 5.500h21L28 11H0z" fill="#e8e8e6" stroke="#aaa" strokeWidth=".5" />
        <path d="M2.500 11h23l1.500 9.500H1z" fill="#d8dcdc" />
        <path d="M5 11.500h18l1.200 7H3.800z" fill="#4ac4ee" />
        <path d="M5 11.500h18l.5 3h-19z" fill="#8adcf6" />
        <path d="M1.500 20h25v2h-25z" fill="#1a1a1a" stroke="#ddd" strokeWidth=".8" />
      </>
    ),
  },
  {
    name: "Terminal",
    art: (
      <>
        <rect x="1.5" y="3.5" width="25" height="20" fill="#2e2e2c" stroke="#c8c8c4" strokeWidth="1.8" />
        <path d="m5.500 7.500 4 3-4 3M10.500 14.500h4.500" stroke="#ddd" strokeWidth="1.5" fill="none" />
      </>
    ),
  },
  {
    name: "Bluefish",
    dots: 1,
    art: (
      <>
        <path d="M19 13c2-3 5-9 8-12-1 7-1 12 .5 18-3-1-6-2.500-8.500-4z" fill="#5aa4e0" />
        <path d="M1.500 9C5-1 19 1 22 10c.5 9-4 14-11 14S-1 18 1.500 9z" fill="#2a6ac0" />
        <path d="M3 8c4-6 12-5 16.500 1.500C14 8 8 7 3 8z" fill="#6ab0f0" />
        <circle cx="14.5" cy="10.500" r="4" fill="#e8e8e8" />
        <circle cx="16" cy="10.500" r="1.600" />
        <path d="M1.500 16c2.500 3 5.500 4 8.500 3" stroke="#123a70" fill="none" strokeWidth="1.5" />
      </>
    ),
  },
  {
    name: "FileZilla",
    dots: 1,
    art: (
      <>
        <rect x=".8" y=".8" width="26.4" height="26.4" fill="#b80808" stroke="#900" strokeDasharray="1.5 1" />
        <text x="3.5" y="19" fontSize="20" fontStyle="italic" fontWeight="700" fontFamily="Liberation Sans" fill="#fff">F</text>
        <text x="13" y="25" fontSize="17" fontStyle="italic" fontWeight="700" fontFamily="Liberation Sans" fill="#fff">Z</text>
      </>
    ),
  },
  {
    name: "VLC",
    art: (
      <>
        <path d="M4.500 18h19l3 9h-25z" fill="#f08010" />
        <path d="M12.500 1h3L22 21c-3 3-13 3-16 0z" fill="#f58a10" />
        <path d="m11 5.500-1.500 5c3 1.500 6 1.500 9 0l-1.500-5c-2 1-4 1-6 0zM8.500 14.500 7 19c4 2.500 10 2.500 14 0l-1.500-4.500c-3 2-8 2-11 0z" fill="#f0f0f0" />
      </>
    ),
  },
  {
    name: "Film",
    art: (
      <>
        <path d="M0 0h28v28H0z" fill="#55565c" />
        <path d="M0 0h28v6L0 19z" fill="#74767e" />
        <path d="M0 17 28 3v12L2 28H0z" fill="#2a261a" />
        <path d="M0 27 28 13" stroke="#c0b468" strokeWidth="1.800" strokeDasharray="1.5 1.5" />
        <path d="M0 18 28 4" stroke="#8a8248" strokeWidth="1" strokeDasharray="1.5 1.5" />
        <path d="M14 28 28 17v11z" fill="#8a8c94" />
        <circle cx="4.5" cy="12" r="2.700" fill="#60b0d0" />
        <circle cx="12.500" cy="8.500" r="2.500" fill="#c048a8" />
        <circle cx="19.5" cy="5.5" r="2.2" fill="#c8c048" />
        <circle cx="25" cy="4" r="2" fill="#222" />
      </>
    ),
  },
  {
    name: "Coin",
    art: (
      <>
        <circle cx="13.500" cy="14" r="13" fill="#d8a040" stroke="#8a5a18" />
        <circle cx="13.500" cy="14" r="10.500" fill="#e4b458" stroke="#b07a28" />
        <text x="6.500" y="21" fontSize="19" fontStyle="italic" fontWeight="700" fontFamily="Liberation Sans" fill="#f8dc98" stroke="#8a5a18" strokeWidth=".8">K</text>
      </>
    ),
  },
];

function Dock() {
  return (
    <aside className="flex w-[47px] shrink-0 flex-col overflow-hidden border-r border-l border-r-[#55534c] border-l-[#6a6860] bg-[#3f3d37]">
      <div className="-mt-[19.5px] flex flex-col">
        {LAUNCHERS.map((app) => (
          <div key={app.name} className="flex h-11 w-[45px] shrink-0 items-center">
            <div className="flex w-[4px] shrink-0 flex-col items-end gap-[2px]">
              {Array.from({ length: app.dots ?? 0 }, (_, i) => (
                <div key={i} className="z-10 -mr-[1px] size-[4px] shrink-0 rounded-full bg-[#e95420]" />
              ))}
            </div>
            <div className={clsx("-ml-[3px] flex h-[42px] w-[42px] items-center justify-center rounded", app.active && "bg-[#62615b]")}>
              <svg viewBox="0 0 28 28" className="size-7 overflow-visible">
                {app.art}
              </svg>
            </div>
          </div>
        ))}
      </div>
      <div className="mt-[17px] ml-[12px] grid w-[20px] grid-cols-3 gap-x-[4px] gap-y-[5px]">
        {Array.from({ length: 9 }, (_, i) => (
          <div key={i} className="size-[4px] rounded-full bg-[#e6e6e4]" />
        ))}
      </div>
    </aside>
  );
}

function TitleBar() {
  return (
    <div className="flex h-7 items-center border-b border-[#77756d] bg-linear-to-b from-[#3b3a36] to-[#4c4a43] pr-[6px] text-[#dfdbd2]">
      <div className="w-[445.5px]" />
      <Fit text="Jahresdurchschnittsbefall.ods - LibreOffice Calc" w={343} size={14} family={SHELL} weight={700} />
      <div className="ml-auto flex gap-[4px]">
        {["M4.500 8.500h7", "M4.800 5.300h6.400v5.400H4.800z", "m5 5 6 6M11 5l-6 6"].map((d, i) => (
          <svg key={d} viewBox="0 0 16 16" className="size-4">
            <circle cx="8" cy="8" r="7.6" fill={i === 2 ? "#ee6236" : "#7a786f"} stroke="#33322e" strokeWidth=".6" />
            <path d={d} fill="none" stroke="#3a3935" strokeWidth="1.2" />
          </svg>
        ))}
      </div>
    </div>
  );
}

const rowShade = "bg-linear-to-r from-[#c1c1c1] to-[#fafafa]";
const barShade = "bg-linear-to-b from-[#f8f8f8] to-[#c6c6c6]";

function MenuAndToolbars() {
  return (
    <div className={clsx("flex h-[73px] flex-col", rowShade)}>
      <div className="flex h-[19px] items-center pl-[6px] text-[#111]">
        {MENUS.map(([label, w, cell]) => (
          <div key={label} className="flex shrink-0 leading-none" style={{ width: cell }}>
            <Mnemonic label={label} w={w} />
          </div>
        ))}
      </div>
      <div className={clsx("flex h-[27px] w-[955px] items-center", barShade)}>
        <Grip className="mr-[5px] ml-[3px]" />
        <Tools items="hand new v open v save v | pdf print preview | cut copy paste v brush | undo V redo V | find spell | rowInsert colInsert rowDelete colDelete | sort sortAsc sortDesc autoFilter | image chart pivot | omega link note header | printArea freeze v split | draw" />
      </div>
      <div className={clsx("flex h-[27px] w-[920px] items-center", barShade)}>
        <Grip className="mr-[6px] ml-[3px]" />
        <Combo value="Liberation Sans" w={86.5} className="mr-[8px] h-[21px] w-[115.5px]" />
        <Combo value="10" w={14} className="h-[21px] w-[47.5px]" />
        <Tools items="| bold italic underline | fontColor v highlight v | left center right | wrap merge | top middle bottom | currency v percent number date | decAdd decDel | indent outdent | border v lineStyle v borderColor v | condition v" />
      </div>
    </div>
  );
}

function Expander({ open }: { open: boolean }) {
  return (
    <svg viewBox="0 0 9 9" className="size-[9px] shrink-0">
      <rect x=".5" y=".5" width="8" height="8" fill="#fff" stroke="#8090a0" />
      <path d={open ? "M2 4.500h5" : "M2 4.500h5M4.500 2v5"} stroke="#222" />
    </svg>
  );
}

const database = (
  <svg viewBox="0 0 16 16" className="size-4 shrink-0">
    <path d="M.5 2.300C.5-.2 7.500-.2 7.500 2.300V10h-7z" fill="#7c7e7a" stroke="#3a3c38" strokeWidth=".7" />
    <path d="M8 3.500C8 1 15.500 1 15.500 3.500V11H8z" fill="#8a8c88" stroke="#3a3c38" strokeWidth=".7" />
    <path d="M.8 4.500h6.500M8.300 5.800h7M.8 7h6.500" stroke="#4a4c48" strokeWidth=".5" />
    <path d="M0 7.500h2.500V13H0z" fill="#2a5aa0" />
    <path d="M2.500 8.500 6 7.300 9 9.500h5.500c1.300 0 1.300 2 0 2.200L12 14.800H5L2.500 13z" fill="#f0c8a0" stroke="#c05a08" strokeWidth=".8" />
  </svg>
);
const queryIcon = (
  <svg viewBox="0 0 16 16" className="size-4 shrink-0">
    <path d="M5.700 4.300h7.800v7.400H5.700z" fill="#fff" stroke="#204a87" strokeWidth="1.100" />
    <path d="M5.700 4.300h7.800v1.300H5.700z" fill="#4a80c8" />
    <path d="M8 7.500h4M8 9.500h4" stroke="#777" strokeWidth=".9" />
    <path d="M0 6.600h3.200V5L7 8l-3.800 3V9.400H0z" fill="#666864" stroke="#333" strokeWidth=".6" />
  </svg>
);

function VLine({ className }: { className?: string }) {
  return <div className={clsx("w-px shrink-0 bg-[#b8b8b8]", className ?? "self-stretch")} />;
}

function Tree() {
  return (
    <div className="flex h-[569px] w-[212px] flex-col overflow-hidden bg-white text-[#1a1a1a]">
      <div className="flex h-[17px] shrink-0 items-center pl-[2px]">
        <Expander open={false} />
        <div className="h-px w-[7.5px] bg-[#b8b8b8]" />
        {database}
        <Fit text="Bibliography" w={70.5} className="ml-[5px]" />
      </div>
      <div className="flex h-[17px] shrink-0 items-center pl-[2px]">
        <Expander open />
        <div className="h-px w-[7.5px] bg-[#b8b8b8]" />
        {database}
        <Fit text="IDA28" w={38} weight={700} className="ml-[5px]" />
      </div>
      <div className="flex h-[17px] shrink-0 items-center pl-[6px]">
        <VLine />
        <div className="w-[15px]" />
        <Expander open />
        <div className="h-px w-[7.5px] bg-[#b8b8b8]" />
        <svg viewBox="0 0 16 16" className="size-4 shrink-0">
          <path d="M7.500 7.500h8v7h-8z" fill="#fff" stroke="#204a87" />
          <path d="M5.500 1.700h8.300v7.800H5.500z" fill="#fff" stroke="#204a87" />
          <path d="M7.500 5h4.500M7.500 7h4.500M9.500 11.300h4.500M9.500 13h4.500" stroke="#777" strokeWidth=".7" />
          <path d="M0 4.300h3V2.700l3.300 3L3 8.700V7H0z" fill="#666864" stroke="#333" strokeWidth=".6" />
        </svg>
        <Fit text="Abfragen" w={57} weight={700} className="ml-[5px]" />
      </div>
      {QUERIES.map((name, i) => {
        const last = i === QUERIES.length - 1;
        return (
          <div key={i} className="flex h-[17px] shrink-0 items-center pl-[6px]">
            <VLine />
            <div className="w-[19px] shrink-0" />
            <VLine />
            <div className="w-[19px] shrink-0" />
            <VLine className={last ? "h-[9px] self-start" : undefined} />
            <div className="h-px w-[11px] shrink-0 bg-[#b8b8b8]" />
            {queryIcon}
            {last ? (
              <div className="ml-[5px] flex h-[17px] items-center bg-[#000080] pl-px text-white">
                <Fit text={name} w={121} weight={700} />
              </div>
            ) : (
              <span className="ml-[5.5px] font-['DejaVu_Sans',sans-serif] text-[11px] tracking-[0.1px] whitespace-pre">{name}</span>
            )}
          </div>
        );
      })}
      <div className="flex h-[17px] shrink-0 items-center pl-[6px]">
        <VLine />
        <div className="w-[15px]" />
        <Expander open={false} />
        <div className="w-[7.5px]" />
        <svg viewBox="0 0 16 16" className="size-4 shrink-0">
          <path d="M7 5.500h8.500v9H7z" fill="#4a80c8" stroke="#204a87" />
          <path d="M.5 1h10v9.500H.5z" fill="#fff" stroke="#204a87" />
          <path d="M.5 1h10v2H.5z" fill="#4a80c8" />
          <path d="M2 5.500h2M5.500 5.500h3M2 7.500h2M5.500 7.500h3" stroke="#666" />
        </svg>
        <Fit text="Tabellen" w={45.5} className="ml-[5px]" />
      </div>
    </div>
  );
}

function TreePanel() {
  return (
    <div className="h-[592px] w-[236px] shrink-0 border-[1.2px] border-t-[#222] border-r-white border-b-white border-l-[#222]">
      <div className="h-full border-2 border-t-[#757575] border-r-[#cfcfcf] border-b-[#cfcfcf] border-l-[#757575]">
        <div className="h-full border-[1.2px] border-t-black border-r-[#c0c0c0] border-b-[#c0c0c0] border-l-black">
          <div className="flex h-[569.5px]">
            <Tree />
            <div className="flex w-4 flex-col bg-[#cbcbcb]">
              <div className={clsx(raised, "h-[15.5px]")}>
                <Arrow dir="up" off />
              </div>
              <div className={clsx(raised, "h-[268px]")} />
              <div className={clsx(raised, "mt-auto h-[15.5px]")}>
                <Arrow dir="down" />
              </div>
            </div>
          </div>
          <div className="flex h-[14.5px] w-[212px] bg-[#cbcbcb]">
            <div className={clsx(raised, "w-[15px]")}>
              <Arrow dir="left" off />
            </div>
            <div className={clsx(raised, "w-[121.5px]")} />
            <div className={clsx(raised, "ml-auto w-[15px]")}>
              <Arrow dir="right" className="-ml-px size-[9px]" />
            </div>
          </div>
        </div>
      </div>
    </div>
  );
}

const FIELDS: { name: string; w: number; cell: string }[] = [
  { name: "Jahr", w: 22.5, cell: "w-[50px]" },
  { name: "Durchschnitt", w: 70, cell: "w-[97px]" },
  { name: "Stöcke", w: 37.5, cell: "w-[65px]" },
  { name: "Milben", w: 36.5, cell: "w-[64px]" },
];

function DataGrid() {
  return (
    <div className="relative flex h-[593px] w-[940px] shrink-0 flex-col border border-black bg-[#c0c0c0]">
      <div className="flex h-[17.3px] shrink-0 border-b border-black text-[#111]">
        <div className="w-7 border-r border-black" />
        {FIELDS.map((f) => (
          <div key={f.name} className={clsx("flex items-center justify-center border-r border-black pl-px", f.cell)}>
            <Fit text={f.name} w={f.w} />
          </div>
        ))}
      </div>
      <div className="flex flex-1">
        <div className="flex w-7 flex-col border-r border-black">
          {RECORDS.map(([year], i) => (
            <div key={year} className="flex h-[15px] items-center border-b border-black pl-[12px]">
              {i === 0 && (
                <svg viewBox="0 0 6 10" className="h-[9px] w-[6px]">
                  <path d="M.5.500 5.500 5 .5 9.500z" fill="#8ae234" stroke="#3f8a05" />
                </svg>
              )}
            </div>
          ))}
        </div>
        <div className="flex flex-1 flex-col bg-white">
          {RECORDS.map((rec, r) => (
            <div key={rec[0]} className="flex h-[15px] bg-[#000080]">
              {rec.map((value, c) => (
                <div
                  key={c}
                  className={clsx("flex items-center border-r border-b border-[#c0c0c0] text-[#e8e8f4]", FIELDS[c].cell)}
                >
                  <div
                    className={clsx(
                      "flex h-full w-full items-center pb-px pl-[2.5px]",
                      r === 0 && c === 0 && "border border-dotted border-[#e8e880] !pb-0 !pl-[1.5px]"
                    )}
                  >
                    <span className="font-['DejaVu_Sans',sans-serif] text-[11px] leading-none">{value}</span>
                  </div>
                </div>
              ))}
            </div>
          ))}
        </div>
      </div>
      <div className="flex h-[16px] shrink-0 text-[#111]">
        <div className="flex border-t border-black">
          <div className="flex w-[60.5px] items-center border-r border-black pl-px">
            <Fit text="Datensatz" w={56} />
          </div>
          <div className="flex w-[59px] items-center justify-center border-r border-black bg-white">
            <Fit text="1" w={7} />
          </div>
          <div className="flex w-[162px] items-center pl-[3px]">
            <Fit text="von 24 (24)" w={64.5} />
          </div>
          {["first", "left", "right", "last", "new"].map((b) => (
            <div key={b} className={clsx(raised, "w-[15.8px]")}>
              {b === "left" && <Arrow dir="left" off />}
              {b === "right" && <Arrow dir="right" className="-ml-[2px] size-[9px]" />}
              {b === "first" && (
                <svg viewBox="0 0 9 9" className="size-[9px] fill-[#808080]">
                  <path d="M1 0h1.500v9H1zM8 0 3.500 4.500 8 9z" />
                </svg>
              )}
              {b === "last" && (
                <svg viewBox="0 0 9 9" className="-ml-[2px] size-[9px] fill-black">
                  <path d="M6.500 0H8v9H6.500zM1 0l4.500 4.500L1 9z" />
                </svg>
              )}
              {b === "new" && <div className="size-[3px] rounded-full border border-[#e0e0e0]" />}
            </div>
          ))}
        </div>
      </div>
      {/* mouse pointer over the row header */}
      <svg viewBox="0 0 14 20" className="absolute top-[3.5px] left-[12.5px] h-[21px] w-[14.5px]">
        <path d="M1 1v14.500l3.500-3 2.500 6 2.500-1-2.500-6h5z" fill="#fff" stroke="#111" />
      </svg>
    </div>
  );
}

function FormulaBar() {
  return (
    <div className="flex h-6 items-center pl-px text-[#111]">
      <Combo value="A7:D31" w={41} className="h-[20px] w-[137px]" />
      <div className="ml-[4px] h-[14px] w-px bg-[#999]" />
      <div className="ml-[7.5px] flex items-center gap-[7.5px]">
        <Icon name="wizard" />
        <Icon name="sum" className="size-[15px]" />
        <Icon name="equals" className="size-[13px]" />
      </div>
      <div className="ml-[9px] h-[14px] w-px bg-[#999]" />
      <div className={clsx(sunken, "ml-[4px] h-[17px] w-[934px] items-center pl-[2px]")}>
        <Fit text="Jahr" w={22.5} />
      </div>
      <div className={clsx(raised, "ml-[3px] h-[17px] w-[20px]")}>
        <Arrow dir="down" />
      </div>
    </div>
  );
}

const COLUMNS = "ABCDEFGHIJKLMNOPQR".split("");
const colWidth = (c: string) => (c === "B" ? "w-[73px]" : "w-[62px]");

type SheetRow = { h: string; cells?: string[]; line?: { text: string; w: number; size: number; weight: number } };
// "~" encloses words the spell checker underlines
const SHEET_ROWS: SheetRow[] = [
  { h: "h-[15px]", line: { text: "Datenquelle: ~Imkerdatenbank~; Abfrage: ~Milbendurchschnitt~, über Datenquelle (Menü: =>Ansicht =>Datenquelle) öffnen, und über den „Zeilen und Spaltenkopf“  alles markieren.", w: 994, size: 12.4, weight: 700 } },
  { h: "h-[17px]", line: { text: "In ~diser~ Tabelle: Cursor auf A7 setzen und in der Symbolleiste „Datenquelle“ auf das Symbol => Daten in Text klicken.", w: 666.5, size: 12.4, weight: 700 } },
  { h: "h-[17px]", line: { text: "Oder durch den entsprechenden Button im Formular Info…", w: 273, size: 11, weight: 400 } },
  { h: "h-[18px]", line: { text: "Bei hinzugekommenem Jahr noch den Datenbereich für das", w: 292, size: 10.8, weight: 700 } },
  { h: "h-[13px]", line: { text: "Diagramm anpassen.", w: 104, size: 10.8, weight: 700 } },
  { h: "h-[12px]" },
  { h: "h-[12px]", cells: ["Jahr", "Durchschnitt", "Stöcke", "Milben"] },
  { h: "h-[15px]", cells: ["1996", "50", "1", "50"] },
  { h: "h-[15px]", cells: ["1997", "200", "2", "400"] },
  { h: "h-[15px]", cells: ["1998", "160", "7", "1120"] },
];

function Sheet() {
  return (
    <div className="relative flex h-[156.5px] w-[1170px] flex-col overflow-hidden bg-white">
      <div className="flex h-[16.3px] shrink-0 bg-linear-to-b from-[#d8d8d8] from-50% to-[#c0c0c0] to-50% text-[#222]">
        <div className="w-[37px] shrink-0 border-r border-b border-black" />
        {COLUMNS.map((c, i) => (
          <div
            key={c}
            className={clsx(
              "flex shrink-0 items-center justify-center border-r border-b pl-[1.5px]",
              colWidth(c),
              i < 4 ? "border-[#000060] bg-linear-to-b from-[#5f5fb0] from-50% to-[#000080] to-50% text-white" : "border-black"
            )}
          >
            <span className={clsx("font-['DejaVu_Sans',sans-serif] text-[11px]", i < 4 && "font-bold")}>{c}</span>
          </div>
        ))}
        <div className="w-[6px] shrink-0 border-b border-black" />
      </div>
      {SHEET_ROWS.map((row, r) => {
        const parts = row.line?.text.split("~") ?? [];
        const selected = r >= 6;
        const big = row.line && row.line.size > 12;
        return (
          <div key={r} className={clsx("flex shrink-0", row.h)}>
            <div
              className={clsx(
                "flex w-[37px] shrink-0 items-center justify-center border-r border-b pt-[1.5px]",
                selected
                  ? "border-[#000080] bg-linear-to-r from-[#5f5fb0] from-48% to-[#000080] to-48% text-white"
                  : "border-black bg-linear-to-r from-[#d8d8d8] from-48% to-[#c0c0c0] to-48% text-[#222]"
              )}
            >
              <span className={clsx("font-['DejaVu_Sans',sans-serif] text-[11px] leading-none", selected && "font-bold")}>{r + 1}</span>
            </div>
            {COLUMNS.map((c, i) => (
              <div
                key={c}
                className={clsx(
                  "flex shrink-0 items-end border-r border-b",
                  colWidth(c),
                  selected && i < 4 ? "border-[#9090b8] bg-[#bfbfdf] text-[#2a2a48]" : "border-[#c0c0c0] text-[#111]",
                  selected && i === 3 && "!border-r-[#000080]",
                  r === 6 && i < 4 && (i === 0 ? "shadow-[inset_0_0_0_1.5px_#000]" : "shadow-[0_-1px_0_#000080]"),
                  r > 6 && "justify-end"
                )}
              >
                {i === 0 && row.line && (
                  <Fit
                    text={parts.join("")}
                    w={row.line.w}
                    size={row.line.size}
                    weight={row.line.weight}
                    family={SHEET}
                    className={big ? "leading-[13px]" : "leading-[10.5px]"}
                  >
                    {parts.map((p, k) =>
                      k % 2 ? (
                        <span key={k} className="underline decoration-red-600 decoration-wavy decoration-[0.8px] underline-offset-[1px]">{p}</span>
                      ) : (
                        p
                      )
                    )}
                  </Fit>
                )}
                {i < 4 && row.cells && (
                  <span className={clsx("font-['Liberation_Sans',sans-serif]", r === 6 ? "text-[10.5px] leading-[11px] tracking-[-0.1px]" : "pr-[0.5px] text-[11px] leading-[10.5px]")}>
                    {row.cells[i]}
                  </span>
                )}
              </div>
            ))}
            <div className="w-[6px] shrink-0 border-b border-[#c0c0c0]" />
          </div>
        );
      })}
      {/* chart object floating over the cells */}
      <div className="absolute top-[99.5px] left-[314px] flex h-[60px] w-[849px] bg-white pt-[10px] pl-[16px]">
        <div className="flex w-[21px] shrink-0">
          <Fit text="7000" w={20.5} size={10.5} family={SHEET} className="leading-[13px] text-[#222]" />
        </div>
        <div className="mt-[7px] ml-[2.5px] h-px w-[4px] shrink-0 bg-[#b3b3b3]" />
        <div className="mt-[7px] h-[60px] w-[790px] shrink-0 border border-[#b3b3b3]" />
      </div>
    </div>
  );
}

function SheetArea() {
  return (
    <>
      <div className="flex h-[156.5px]">
        <Sheet />
        <div className="flex w-[16px] flex-col bg-[#cbcbcb]">
          <div className="flex h-[5px] items-center justify-center bg-[#808080]">
            <div className="h-px w-[8px] bg-black" />
          </div>
          <div className={clsx(raised, "h-[16px]")}>
            <Arrow dir="up" off />
          </div>
          <div className={clsx(raised, "h-[19.5px]")} />
          <div className={clsx(raised, "mt-auto h-[15.5px]")}>
            <Arrow dir="down" />
          </div>
        </div>
      </div>
      <div className="flex h-[15.5px] w-[1170px] bg-[#cbcbcb]">
        <div className={clsx(raised, "w-[15.5px]")}>
          <Arrow dir="left" off />
        </div>
        <div className={clsx(raised, "w-[536.5px]")} />
        <div className={clsx(raised, "ml-auto w-[15px]")}>
          <Arrow dir="right" className="-ml-[2px] size-[9px]" />
        </div>
        <div className="flex w-[5px] items-center justify-center bg-[#808080]">
          <div className="h-[8px] w-px bg-black" />
        </div>
      </div>
      <div className="flex h-4">
        <div className="flex w-[98px] items-center border-t border-black pt-px pl-[11px]">
          <svg viewBox="0 0 80 12" className="h-[12px] w-[80px] shrink-0" fill="#808080">
            <path d="M.5 0h1v12h-1zM7 0 1.800 6 7 12zM21.500 0l-6 6 6 6zM31 0l6 6-6 6zM46 0l5.500 6-5.500 6zM52 0h1v12h-1z" />
            <path d="m31 12 6-6M46 12l5.500-6M53.500 0v12M7.500 0v12M22 0v12" stroke="#fff" strokeWidth=".8" />
            <path d="M67 4.500h4V1h4v3.500h4v4h-4V12h-4V8.500h-4z" fill="#000" />
          </svg>
        </div>
        <div className="flex w-[74px] items-center justify-center border border-t-0 border-black bg-white">
          <Fit text="Tabelle1" w={50} weight={700} />
        </div>
        <div className="w-[380px] border-t border-black" />
      </div>
    </>
  );
}

function Sidebar() {
  return (
    <div className="flex h-[844px] shrink-0 border-b border-[#808080]">
      <div className="relative w-[6px] border-l border-[#808080] shadow-[inset_1px_0_0_#fff]">
        <div className="absolute top-[386px] -left-px flex h-[73px] w-[7px] items-center justify-center bg-black">
          <svg viewBox="0 0 4 7" className="h-[7px] w-[4px]">
            <path d="m0 0 4 3.500L0 7z" fill="#c8c8c8" />
          </svg>
        </div>
      </div>
      <div className="flex w-[41px] flex-col items-center border-l border-[#808080] shadow-[inset_1px_1px_0_#fff]">
        <svg viewBox="0 0 12 12" className="mt-[14.5px] size-[12px]">
          <path d="M.5 1.500H8M.5 4H8M.5 6.500H8" stroke="#3a4f7c" strokeWidth="1.2" />
          <path d="M5.500 8.500h6l-3 3.200z" fill="#15234a" />
        </svg>
        <div className="mt-[12.5px] h-px w-[23px] bg-[#a8a8a8]" />
        <svg viewBox="0 0 22 22" className="mt-[8.5px] size-[22px]">
          <path d="M2 1.500 4.500 4.500 7 3.500 6.500.8C9.500.8 10.500 3 10 6l6 5.500c3.500-.5 5.500 1.500 5.500 5.500L19 15l-2.500 1.500.8 4.500c-3 0-5-2-4.500-5.500L7 8.500C3.500 9 .5 6.500.5 3.500z" fill="#f4f4f4" stroke="#888" />
        </svg>
        <svg viewBox="0 0 22 22" className="mt-[14px] size-[22px]">
          <path d="M3.500 1.500h18V6h-2.500V4.500h-4.500V18h-4V4.500H6V6H3.500z" fill="#5b5d59" stroke="#333" strokeWidth=".5" />
          <path d="M.7 6.500V20.300H21z" fill="#8acb5a" stroke="#4e9a06" strokeWidth="1.3" />
          <path d="M4.500 13.500V17h6z" fill="#b8d8a0" stroke="#4e9a06" />
        </svg>
        <svg viewBox="0 0 22 22" className="mt-[12px] size-[22px]">
          <path d="m8 4.500 3-3 3 3" stroke="#555" fill="none" />
          <rect x=".8" y="4.800" width="20.400" height="13.200" rx="1" fill="#e0a040" stroke="#8f5902" strokeWidth="1.5" />
          <path d="M3.500 7.500h15V16h-15z" fill="#f8b850" stroke="#8f5902" strokeWidth=".8" />
          <path d="M4 8h14v2.500H4z" fill="#7a9cc0" />
          <ellipse cx="8" cy="15" rx="3" ry="1.500" fill="#fff2a0" />
          <path d="M13 16v-4l-3-2M13 12.500l3.500-3" stroke="#4a3010" strokeWidth="1.2" fill="none" />
        </svg>
        <svg viewBox="0 0 22 22" className="mt-[13.5px] size-[22px]">
          <circle cx="11" cy="11" r="10" fill="#e4e4e0" stroke="#777" strokeWidth="1.3" />
          <circle cx="11" cy="11" r="7.7" fill="#fcfcfc" stroke="#999" strokeWidth=".8" />
          <path d="m6 5.500 6.800 4-3 3.200z" fill="#e03030" />
          <path d="m16 16-6.200-3.300 3-3.200z" fill="#5078b0" />
        </svg>
        <Icon name="wizard" className="mt-[14.5px] size-[21px]" />
      </div>
    </div>
  );
}

function Workspace() {
  return (
    <div className="flex h-[846px]">
      <div className="flex w-[1186px] shrink-0 flex-col">
        <div className="h-px shrink-0 bg-[#808080]" />
        <div className="h-px shrink-0 bg-white" />
        <div className={clsx("ml-[1.5px] flex h-[27px] w-[1182.5px] shrink-0", rowShade)}>
          <div className={clsx("flex w-[559px] items-center", barShade)}>
            <Grip className="mr-[5px] ml-[3.5px]" />
            <Tools items="saveOff | editOff | cutOff copy pasteOff | undo | search | refresh v | sortBy sortAsc sortDesc | autoFilter funnelOff funnel | funnelDel | dataText dataFields mail docSource explorer" />
          </div>
        </div>
        <div className="h-[3px] w-[1184px] shrink-0 border-t border-[#808080] bg-[#f4f4f4]" />
        <div className="flex h-[593px] shrink-0 pl-[2px]">
          <TreePanel />
          <div className="w-[6px]" />
          <DataGrid />
        </div>
        <div className="relative mt-px h-[8px] shrink-0 border-t border-[#808080] pt-px shadow-[inset_0_1px_0_#fff]">
          <div className="mt-[4px] h-px bg-[#808080]" />
          <div className="h-px bg-white" />
          <div className="absolute top-0 left-[556px] flex h-[7px] w-[73px] items-center justify-center bg-black">
            <svg viewBox="0 0 6 6" className="h-[5px] w-[5px]">
              <path d="M1.500 6 4.500 0" stroke="#ccc" strokeWidth="1.6" />
            </svg>
          </div>
        </div>
        <FormulaBar />
        <SheetArea />
      </div>
      <Sidebar />
    </div>
  );
}

function CheckOption({ label, w }: { label: string; w: number }) {
  return (
    <div className="flex items-center">
      <div className={clsx(sunken, "h-[12px] w-[12px]")} />
      <div className="ml-[2px] flex h-4 items-center bg-[#c4c4c4] px-[3px]">
        <Mnemonic label={label} w={w} />
      </div>
    </div>
  );
}

function FindBar() {
  return (
    <div className={clsx("flex h-[29px] text-[#111]", rowShade)}>
      <div className={clsx("flex w-[1051px] items-center", barShade)}>
        <Grip className="mr-[12px] ml-[3px]" />
        <svg viewBox="0 0 10 10" className="size-[10px]">
          <path d="m1.500 1.500 7 7M8.500 1.500l-7 7" stroke="#777" strokeWidth="2.6" />
          <path d="m1.500 1.500 7 7M8.500 1.500l-7 7" stroke="#aaa" strokeWidth="1" />
        </svg>
        <Combo value="Suchen" w={41} className="ml-[7.5px] h-[20px] w-[248px]" textClass="text-[#8c8c8c]" />
        {["M8 1 1.500 7.500l2 2L8 5l4.500 4.500 2-2zM8 12v2", "M8 13 1.500 6.500l2-2L8 9l4.500-4.500 2 2zM8 0v2"].map((d) => (
          <svg key={d} viewBox="0 0 16 16" className="ml-[4px] h-4 w-[18.5px]">
            <path d={d} fill="#dcdcdc" stroke="#c0c0c0" strokeWidth=".8" />
          </svg>
        ))}
        <Fit text="Alle suchen" w={64.5} className="ml-[5.5px] text-[#8c8c8c]" />
        <div className="w-[6px]" />
        <CheckOption label="_Formatierte Anzeige" w={112.5} />
        <div className="w-px" />
        <CheckOption label="_Groß- und Kleinschreibung beachten" w={200.5} />
        <div className="ml-[3px] flex items-center">
          <Separator />
          <Tools items="find" />
          <Separator />
        </div>
        <div className="mr-[4px] ml-auto h-[25px] w-[250px] bg-[#c0c0c0]" />
      </div>
    </div>
  );
}

function StatusBar() {
  const cell = "flex h-[17px] shrink-0 items-center border-r border-[#808080] shadow-[1px_0_0_#fff]";
  return (
    <div className="flex h-[22px] items-start border-t border-[#808080] bg-[#c0c0c0] pt-[2.5px] text-[#111] shadow-[inset_0_1px_0_#d8d8d8]">
      <div className={clsx(cell, "w-[123px] pl-[10px]")}>
        <Fit text="Tabelle 1 von 1" w={83} />
      </div>
      <div className={clsx(cell, "w-[214px] pl-[8px]")}>
        <Fit text="25 Zeilen, 4 Spalten ausgewählt" w={177.5} />
      </div>
      <div className={clsx(cell, "w-[87px] pl-[8px]")}>
        <Fit text="Standard" w={50} />
      </div>
      <div className={clsx(cell, "w-[162px] pl-[19px]")}>
        <Fit text="Deutsch (Deutschland)" w={125.5} />
      </div>
      <div className={clsx(cell, "w-[67.5px]")} />
      <div className={clsx(cell, "w-[29.5px] justify-center")}>
        <svg viewBox="0 0 12 12" className="size-[12px]">
          <path d="M0 3h8v6H0z" fill="#707070" />
          <path d="M9 1.500h3M10.500 1.500v10M9 11.500h3" stroke="#707070" strokeWidth="1" />
        </svg>
      </div>
      <div className={clsx(cell, "w-[29px] justify-center")}>
        <svg viewBox="0 0 12 12" className="size-[12px]" fill="none" stroke="#808080">
          <path d="M9.500 5V.8h-8v10.400h8V9.500" strokeWidth="1.200" />
          <path d="m5 6 2 2.800L11.500 3" strokeWidth="1.200" />
        </svg>
      </div>
      <div className={clsx(cell, "w-[29px]")} />
      <div className={clsx(cell, "w-[306px] pl-[19.5px]")}>
        <Fit text="Mittelwert: 8817,08333333333; Summe: 846440" w={270} />
      </div>
      <div className={clsx(cell, "w-[143px] pl-[8px]")}>
        <svg viewBox="0 0 128 14" className="h-[14px] w-[128px]" stroke="#808080" fill="none">
          <path d="M1 7h8M119 7h8M123 3v8M64 1v12" strokeWidth="1.6" />
          <path d="M16 7h97" strokeWidth="1.6" />
          <circle cx="49" cy="7" r="4" fill="#fff" stroke="#999" strokeWidth=".8" />
        </svg>
      </div>
      <div className="flex h-[17px] items-center pl-[7px]">
        <Fit text="75 %" w={26} />
      </div>
    </div>
  );
}

export default function App() {
  return (
    <div className="h-screen w-screen overflow-hidden bg-[#c0c0c0]">
      <div className="relative flex h-[1025px] w-[1281px] flex-col [zoom:2.604]">
        <TopBar />
        <div className="flex h-[998px]">
          <Dock />
          <main className="flex w-[1234px] flex-col bg-[#c0c0c0]">
            <TitleBar />
            <MenuAndToolbars />
            <Workspace />
            <FindBar />
            <StatusBar />
          </main>
        </div>
        {/* hand-drawn marker around "Daten in Text" */}
        <div className="pointer-events-none absolute top-[114.5px] left-[464px] h-[53px] w-[74.5px] rounded-[50%] border-[3.5px] border-[#3cd426]" />
      </div>
    </div>
  );
}
